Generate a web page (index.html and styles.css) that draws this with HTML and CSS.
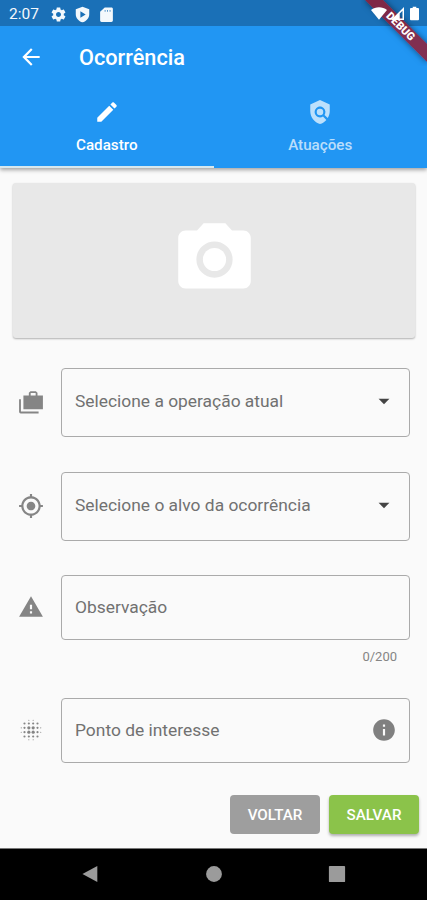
FILE: index.html
```html
<!DOCTYPE html>
<html lang="pt-BR">
<head>
<meta charset="utf-8">
<meta name="viewport" content="width=device-width, initial-scale=1">
<title>Ocorrência</title>
<link rel="stylesheet" href="styles.css">
</head>
<body>
<div class="phone">
  <header class="header">
    <div class="status">
      <span class="clock">2:07</span>
      <svg class="st-gear" viewBox="0 0 24 24"><path fill-rule="evenodd" d="M19.43 12.98c.04-.32.07-.64.07-.98s-.03-.66-.07-.98l2.11-1.65c.19-.15.24-.42.12-.64l-2-3.46c-.12-.22-.39-.3-.61-.22l-2.49 1c-.52-.4-1.08-.73-1.69-.98l-.38-2.65C14.46 2.18 14.25 2 14 2h-4c-.25 0-.46.18-.49.42l-.38 2.65c-.61.25-1.17.59-1.69.98l-2.49-1c-.23-.09-.49 0-.61.22l-2 3.46c-.13.22-.07.49.12.64l2.11 1.65c-.04.32-.07.65-.07.98s.03.66.07.98l-2.11 1.65c-.19.15-.24.42-.12.64l2 3.46c.12.22.39.3.61.22l2.49-1c.52.4 1.08.73 1.69.98l.38 2.65c.03.24.24.42.49.42h4c.25 0 .46-.18.49-.42l.38-2.65c.61-.25 1.17-.59 1.69-.98l2.49 1c.23.09.49 0 .61-.22l2-3.46c.12-.22.07-.49-.12-.64l-2.11-1.65zM12 15.500c-1.930 0-3.500-1.570-3.500-3.500s1.570-3.500 3.500-3.500 3.500 1.570 3.500 3.500-1.570 3.500-3.500 3.500z"/></svg>
      <svg class="st-shield" viewBox="0 0 24 24"><path fill-rule="evenodd" d="M12 1 2.500 4.500v7c0 5.500 4 9.900 9.500 11.500 5.500-1.600 9.500-6 9.500-11.500v-7zM9 7.500l7.500 4.500L9 16.500z"/></svg>
      <svg class="st-card" viewBox="0 0 24 24"><path fill-rule="evenodd" d="M19 2H9.500L3 8v12.500c0 1.100.9 2 2 2h14c1.100 0 2-.9 2-2V4c0-1.100-.9-2-2-2zM9.500 5.500h1V8h-1zm3.500 0h1V8h-1zm3.500 0h1V8h-1z"/></svg>
    </div>
    <div class="appbar">
      <svg class="back" viewBox="0 0 24 24"><path d="M20 11H7.830l5.590-5.590L12 4l-8 8 8 8 1.410-1.410L7.830 13H20v-2z"/></svg>
      <h1 class="title">Ocorrência</h1>
    </div>
    <nav class="tabs">
      <div class="tab tab-active">
        <svg class="icon" viewBox="0 0 24 24"><path d="M3 17.250V21h3.750L17.810 9.940l-3.750-3.750L3 17.250zM20.710 7.040c.39-.39.39-1.020 0-1.410l-2.340-2.340c-.39-.39-1.020-.39-1.410 0l-1.830 1.830 3.750 3.750 1.830-1.830z"/></svg>
        <span class="tab-label">Cadastro</span>
      </div>
      <div class="tab">
        <svg class="icon" viewBox="0 0 24 24"><path d="M21 5l-9-4-9 4v6c0 5.550 3.840 10.740 9 12 2.300-.56 4.330-1.900 5.880-3.710l-3.120-3.120c-1.940 1.290-4.580 1.070-6.290-.64-1.950-1.950-1.950-5.120 0-7.070 1.950-1.950 5.120-1.950 7.070 0 1.710 1.710 1.920 4.350.64 6.290l2.900 2.900C20.290 15.690 21 13.380 21 11V5z"/><circle cx="12" cy="12" r="3"/></svg>
        <span class="tab-label">Atuações</span>
      </div>
    </nav>
    <div class="ribbon"><span class="ribbon-band">DEBUG</span></div>
    <div class="signals">
      <svg class="st-wifi" viewBox="0 0 18 14"><path d="M9 14 0 3.200C5-1 13-1 18 3.200z"/></svg>
      <svg class="st-cell" viewBox="0 0 14 14"><path fill-rule="evenodd" d="M14 0v14H0zM12.400 4v8.400h-3V7z"/></svg>
      <svg class="st-battery" viewBox="0 0 10 15"><path d="M3 0h4v1.500h2q1 0 1 1V14q0 1-1 1H1q-1 0-1-1V2.500q0-1 1-1h2z"/></svg>
    </div>
  </header>

  <main class="content">
    <div class="photo">
      <svg class="camera" viewBox="0 0 24 24"><circle cx="12" cy="12" r="3.200"/><path d="M9 2 7.170 4H4c-1.100 0-2 .9-2 2v12c0 1.100.9 2 2 2h16c1.100 0 2-.9 2-2V6c0-1.100-.9-2-2-2h-3.170L15 2H9zm3 15c-2.760 0-5-2.240-5-5s2.240-5 5-5 5 2.240 5 5-2.240 5-5 5z"/></svg>
    </div>
    <div class="row row-operation">
      <svg class="icon lead" viewBox="0 0 24 24"><path fill-rule="evenodd" d="M1 9.500h1.700v11.300H19v1.700H2.500Q1 22.500 1 21zM23 6h-5V3.500L16.500 2h-5L10 3.500V6H5v12.800h18zM11.700 3.700h4.600V6h-4.600z"/></svg>
      <div class="field select">Selecione a operação atual<svg class="icon caret" viewBox="0 0 24 24"><path d="M7 10l5 5 5-5z"/></svg></div>
    </div>
    <div class="row row-target">
      <svg class="icon lead" viewBox="0 0 24 24"><path d="M12 8c-2.210 0-4 1.790-4 4s1.790 4 4 4 4-1.790 4-4-1.790-4-4-4zm8.940 3c-.46-4.170-3.770-7.480-7.940-7.940V1h-2v2.060C6.830 3.520 3.520 6.830 3.060 11H1v2h2.060c.46 4.170 3.770 7.480 7.940 7.940V23h2v-2.060c4.170-.46 7.480-3.770 7.940-7.940H23v-2h-2.060zM12 19c-3.870 0-7-3.130-7-7s3.130-7 7-7 7 3.130 7 7-3.130 7-7 7z"/></svg>
      <div class="field select">Selecione o alvo da ocorrência<svg class="icon caret" viewBox="0 0 24 24"><path d="M7 10l5 5 5-5z"/></svg></div>
    </div>
    <div class="row row-note">
      <svg class="icon lead" viewBox="0 0 24 24"><path d="M1 21h22L12 2 1 21zm12-3h-2v-2h2v2zm0-4h-2v-4h2v4z"/></svg>
      <div class="field">Observação</div>
    </div>
    <div class="counter">0/200</div>
    <div class="row row-poi">
      <svg class="icon lead" viewBox="0 0 24 24">
        <circle cx="10" cy="10" r="1.500"/><circle cx="14" cy="10" r="1.500"/><circle cx="10" cy="14" r="1.500"/><circle cx="14" cy="14" r="1.500"/>
        <circle cx="6" cy="6" r="1"/><circle cx="10" cy="6" r="1"/><circle cx="14" cy="6" r="1"/><circle cx="18" cy="6" r="1"/>
        <circle cx="6" cy="10" r="1"/><circle cx="18" cy="10" r="1"/><circle cx="6" cy="14" r="1"/><circle cx="18" cy="14" r="1"/>
        <circle cx="6" cy="18" r="1"/><circle cx="10" cy="18" r="1"/><circle cx="14" cy="18" r="1"/><circle cx="18" cy="18" r="1"/>
        <circle cx="3" cy="10" r=".5"/><circle cx="3" cy="14" r=".5"/><circle cx="21" cy="10" r=".5"/><circle cx="21" cy="14" r=".5"/>
        <circle cx="10" cy="3" r=".5"/><circle cx="14" cy="3" r=".5"/><circle cx="10" cy="21" r=".5"/><circle cx="14" cy="21" r=".5"/>
      </svg>
      <div class="field">Ponto de interesse<svg class="icon info" viewBox="0 0 24 24"><path d="M12 2C6.480 2 2 6.480 2 12s4.480 10 10 10 10-4.480 10-10S17.520 2 12 2zm1 15h-2v-6h2v6zm0-8h-2V7h2v2z"/></svg></div>
    </div>
    <div class="actions">
      <button class="btn btn-back">VOLTAR</button>
      <button class="btn btn-save">SALVAR</button>
    </div>
  </main>

  <footer class="navbar">
    <svg viewBox="0 0 20 20"><path d="M.5 10 17 1v18z"/></svg>
    <svg viewBox="0 0 20 20"><circle cx="10" cy="10" r="8.800"/></svg>
    <svg viewBox="0 0 20 20"><rect x="1" y="1" width="18" height="18" rx="1"/></svg>
  </footer>
</div>
</body>
</html>
```

FILE: styles.css
```css
* { box-sizing: border-box; }

body {
  margin: 0;
  background: #fafafa;
  font-family: Roboto, "Liberation Sans", sans-serif;
}

svg { display: block; flex: none; fill: currentColor; }

.icon { width: 26px; height: 26px; }

.phone {
  display: flex;
  flex-direction: column;
  width: 427px;
  height: 900px;
  overflow: hidden;
}

.header {
  position: relative;
  flex: none;
  height: 168px;
  background: #2196f3;
  color: #fff;
  box-shadow: 0 2px 4px rgba(0, 0, 0, .35);
}

.status {
  display: flex;
  align-items: center;
  height: 26px;
  padding: 2px 0 0 9px;
  background: #1a70b7;
  color: #f3f8fc;
}

.clock { width: 41px; font-size: 15.500px; }
.st-gear { width: 17px; height: 17px; }
.st-shield { width: 17px; height: 17px; margin-left: 7px; }
.st-card { width: 17px; height: 17px; margin-left: 7px; }

.appbar {
  display: flex;
  align-items: center;
  height: 61px;
  padding-left: 18px;
  padding-top: 1px;
}

.back { width: 26px; height: 26px; }

.title {
  margin: 1px 0 0 35px;
  font-size: 21.700px;
  font-weight: 500;
}

.tabs { display: flex; height: 81px; }

.tab {
  display: flex;
  flex: 1;
  flex-direction: column;
  align-items: center;
  padding-top: 12px;
  color: rgba(255, 255, 255, .7);
}

.tab-active { color: #fff; border-bottom: 2px solid #d7e8ee; }
.tab-label { margin-top: 11px; font-size: 15.200px; line-height: 19px; font-weight: 500; }

.ribbon {
  position: absolute;
  top: 0;
  right: 0;
  width: 66px;
  height: 66px;
  overflow: hidden;
}

.ribbon-band {
  position: absolute;
  top: 19.500px;
  left: -4px;
  width: 87px;
  height: 13px;
  background: rgba(150, 25, 45, .82);
  box-shadow: 0 0 6px rgba(0, 0, 0, .5);
  font-size: 11px;
  line-height: 13px;
  font-weight: 900;
  text-align: center;
  transform: rotate(45deg);
}

.signals {
  position: absolute;
  top: 6px;
  right: 8px;
  display: flex;
  align-items: center;
  gap: 4px;
  height: 15px;
}

.st-wifi { width: 16px; height: 13px; }
.st-cell { width: 13px; height: 13px; margin-right: 2px; }
.st-battery { width: 9px; height: 15px; }

.content { flex: 1; padding-top: 15px; }

.photo {
  display: flex;
  justify-content: center;
  height: 155px;
  margin: 0 12px 0 13px;
  padding-top: 33px;
  border-radius: 3px;
  background: #e8e8e8;
  box-shadow: 0 1px 2px rgba(0, 0, 0, .3);
}

.camera { width: 87px; height: 87px; color: #fff; }

.row {
  display: flex;
  align-items: center;
  padding: 0 17px 0 18px;
}

.row-operation { margin-top: 30px; height: 69px; }
.row-target { margin-top: 35px; height: 69px; }
.row-note { margin-top: 34px; height: 65px; }
.row-poi { margin-top: 33px; height: 65px; }

.lead { margin-bottom: 2px; color: #858585; }

.field {
  display: flex;
  flex: 1;
  align-items: center;
  justify-content: space-between;
  height: 100%;
  margin-left: 17px;
  padding: 0 12px 1px 13px;
  border: 1px solid #aaa;
  border-radius: 4px;
  color: #717171;
  font-size: 17.400px;
}

.select { padding-bottom: 3px; }
.caret { color: #444; }
.info { color: #808080; }

.counter {
  height: 25px;
  padding: 8px 30px 0 0;
  color: #858585;
  font-size: 13px;
  line-height: 17px;
  text-align: right;
}

.actions {
  display: flex;
  justify-content: flex-end;
  gap: 9px;
  margin-top: 32px;
  padding-right: 8px;
}

.btn {
  width: 90px;
  height: 39px;
  padding: 0;
  border: 0;
  border-radius: 4px;
  color: #fff;
  font: 500 15.200px Roboto, "Liberation Sans", sans-serif;
}

.btn-back { background: #9e9e9e; }
.btn-save { background: #8bc34a; box-shadow: 0 2px 3px rgba(0, 0, 0, .3); }

.navbar {
  display: flex;
  flex: none;
  align-items: center;
  justify-content: center;
  gap: 105px;
  height: 52px;
  padding-bottom: 1px;
  border-top: 1px solid #777;
  background: #000;
  color: #9b9b9b;
}

.navbar svg { width: 18px; height: 18px; }
```
